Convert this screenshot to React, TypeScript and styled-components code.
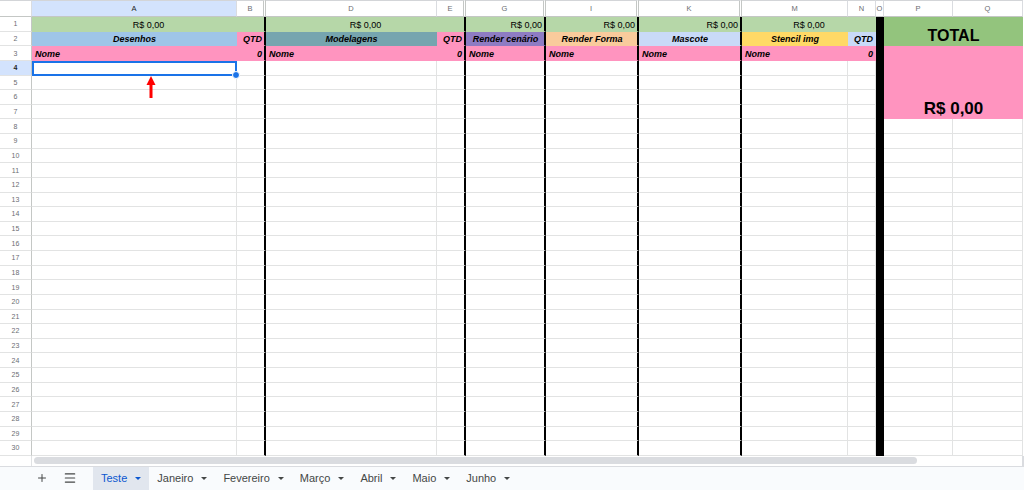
import React from 'react'
import styled, { createGlobalStyle } from 'styled-components'
import { Plus, Menu } from 'lucide-react'

const GlobalStyle = createGlobalStyle`
  html, body {
    margin: 0;
    padding: 0;
    background: #fff;
  }
  body {
    font-family: 'Liberation Sans', Arial, sans-serif;
  }
`

type Align = 'left' | 'center' | 'right'

interface CellSpec {
  text?: string
  bg?: string
  align?: Align
  bold?: boolean
  italic?: boolean
  colSpan?: number
  rowSpan?: number
  thick?: boolean
  size?: number
  selected?: boolean
}

const COLS = [
  { key: 'A', width: 205 },
  { key: 'B', width: 29, hiddenAfter: true },
  { key: 'D', width: 171 },
  { key: 'E', width: 29, hiddenAfter: true },
  { key: 'G', width: 80, hiddenAfter: true },
  { key: 'I', width: 93, hiddenAfter: true },
  { key: 'K', width: 103, hiddenAfter: true },
  { key: 'M', width: 106 },
  { key: 'N', width: 28 },
  { key: 'O', width: 8 },
  { key: 'P', width: 69 },
  { key: 'Q', width: 70 },
]

const THICK = new Set(['B', 'E', 'G', 'I', 'K'])

const GREEN = '#b6d7a8'
const TOTAL_GREEN = '#93c47d'
const PINK = '#ff94bf'
const BLUE = '#9fc5e8'
const TEAL = '#76a5af'
const PURPLE = '#8e7cc3'
const PEACH = '#f9cb9c'
const LIGHT_BLUE = '#c9daf8'
const YELLOW = '#ffd966'
const GRID = '#e2e3e3'

const black: CellSpec = { bg: '#000' }

const label = (text: string, bg: string, align: Align = 'center', thick = false): CellSpec => ({
  text,
  bg,
  align,
  bold: true,
  italic: true,
  thick,
})

const money = (align: Align, thick: boolean, colSpan = 1): CellSpec => ({
  text: 'R$ 0,00',
  bg: GREEN,
  align,
  thick,
  colSpan,
})

const emptyRow = (withTotal: boolean, selectedA = false): CellSpec[] =>
  COLS.filter((c) => withTotal || (c.key !== 'P' && c.key !== 'Q')).map((c) =>
    c.key === 'O' ? black : { thick: THICK.has(c.key), selected: selectedA && c.key === 'A' }
  )

const rows: CellSpec[][] = [
  [
    money('center', true, 2),
    money('center', true, 2),
    money('right', true),
    money('right', true),
    money('right', true),
    money('center', false, 2),
    black,
    { text: 'TOTAL', bg: TOTAL_GREEN, align: 'center', bold: true, size: 16, colSpan: 2, rowSpan: 2 },
  ],
  [
    label('Desenhos', BLUE),
    label('QTD', PINK, 'right', true),
    label('Modelagens', TEAL),
    label('QTD', PINK, 'right', true),
    label('Render cenário', PURPLE, 'center', true),
    label('Render Forma', PEACH, 'center', true),
    label('Mascote', LIGHT_BLUE, 'center', true),
    label('Stencil img', YELLOW),
    label('QTD', LIGHT_BLUE, 'right'),
    black,
  ],
  [
    label('Nome', PINK, 'left'),
    label('0', PINK, 'right', true),
    label('Nome', PINK, 'left'),
    label('0', PINK, 'right', true),
    label('Nome', PINK, 'left', true),
    label('Nome', PINK, 'left', true),
    label('Nome', PINK, 'left', true),
    label('Nome', PINK, 'left'),
    label('0', PINK, 'right'),
    black,
    { text: 'R$ 0,00', bg: PINK, align: 'center', bold: true, size: 17, colSpan: 2, rowSpan: 5 },
  ],
  emptyRow(false, true),
  emptyRow(false),
  emptyRow(false),
  emptyRow(false),
  ...Array.from({ length: 23 }, () => emptyRow(true)),
]

const TABS = ['Teste', 'Janeiro', 'Fevereiro', 'Março', 'Abril', 'Maio', 'Junho']

const Page = styled.div`
  width: 1024px;
  height: 490px;
  display: flex;
  flex-direction: column;
  overflow: hidden;
  background: #fff;
`

const Sheet = styled.div`
  position: relative;
  display: grid;
  grid-template-columns: 32px ${COLS.map((c) => `${c.width}px`).join(' ')};
  grid-template-rows: 17px repeat(30, 14.633px);
`

const ColHead = styled.div<{ $active?: boolean; $hiddenAfter?: boolean }>`
  box-sizing: border-box;
  display: flex;
  align-items: center;
  justify-content: center;
  font-size: 7.5px;
  color: ${(p) => (p.$active ? '#1f1f1f' : '#6b6e72')};
  background: ${(p) => (p.$active ? '#d3e3fd' : '#fff')};
  border-top: 1px solid #d3d5d8;
  border-bottom: 1px solid #c4c7c5;
  border-right: ${(p) => (p.$hiddenAfter ? '3px double #c4c7c5' : '1px solid #dadce0')};
  overflow: hidden;
`

const RowHead = styled.div<{ $active?: boolean }>`
  box-sizing: border-box;
  display: flex;
  align-items: center;
  justify-content: center;
  font-size: 7px;
  font-weight: ${(p) => (p.$active ? 'bold' : 'normal')};
  color: ${(p) => (p.$active ? '#1f1f1f' : '#6b6e72')};
  background: ${(p) => (p.$active ? '#d3e3fd' : '#fff')};
  border-right: 1px solid #c4c7c5;
  border-bottom: 1px solid ${GRID};
`

const justify: Record<Align, string> = {
  left: 'flex-start',
  center: 'center',
  right: 'flex-end',
}

const Cell = styled.div<{
  $bg?: string
  $align: Align
  $bold?: boolean
  $italic?: boolean
  $colSpan: number
  $rowSpan: number
  $thick?: boolean
  $size: number
  $selected?: boolean
}>`
  box-sizing: border-box;
  position: relative;
  grid-column: span ${(p) => p.$colSpan};
  grid-row: span ${(p) => p.$rowSpan};
  display: flex;
  align-items: flex-end;
  justify-content: ${(p) => justify[p.$align]};
  padding: 0 2px 1px 3px;
  background: ${(p) => p.$bg ?? '#fff'};
  border-right: ${(p) => (p.$thick ? '2px solid #000' : `1px solid ${p.$bg ? 'transparent' : GRID}`)};
  border-bottom: 1px solid ${(p) => (p.$bg ? 'transparent' : GRID)};
  font-size: ${(p) => p.$size}px;
  font-weight: ${(p) => (p.$bold ? 'bold' : 'normal')};
  font-style: ${(p) => (p.$italic ? 'italic' : 'normal')};
  line-height: 1;
  color: #000;
  white-space: nowrap;

  ${(p) =>
    p.$selected &&
    `
    &::after {
      content: '';
      position: absolute;
      top: 0;
      left: 0;
      right: -1px;
      bottom: -1px;
      border: 2px solid #1a73e8;
      z-index: 2;
    }
  `}
`

const FillHandle = styled.span`
  position: absolute;
  right: -4px;
  bottom: -4px;
  width: 6px;
  height: 6px;
  border-radius: 50%;
  background: #1a73e8;
  border: 1px solid #fff;
  z-index: 3;
`

const Arrow = styled.svg`
  position: absolute;
  left: 146px;
  top: 76px;
  z-index: 4;
`

const ScrollRow = styled.div`
  display: flex;
  height: 10px;
`

const ScrollGutter = styled.div`
  box-sizing: border-box;
  width: 32px;
  border-right: 1px solid #e0e2e4;
`

const ScrollTrack = styled.div`
  flex: 1;
  display: flex;
  align-items: center;
  padding-left: 2px;
  border-right: 2px solid #dadce0;
`

const ScrollThumb = styled.div`
  width: 883px;
  height: 7px;
  border-radius: 4px;
  background: #dadce0;
`

const TabBar = styled.div`
  height: 23px;
  border-top: 1px solid #dadce0;
  background: #f9fbfd;
  display: flex;
  align-items: stretch;
  padding-left: 28px;
`

const IconButton = styled.div`
  width: 28px;
  display: flex;
  align-items: center;
  justify-content: center;
  color: #444746;
`

const TabList = styled.div`
  display: flex;
  margin-left: 9px;
`

const Tab = styled.div<{ $active?: boolean }>`
  display: flex;
  align-items: center;
  gap: 8px;
  padding: 0 8px;
  font-size: 11px;
  color: ${(p) => (p.$active ? '#0b57d0' : '#444746')};
  background: ${(p) => (p.$active ? '#e1e6ee' : 'transparent')};
`

const Caret = styled.span`
  width: 0;
  height: 0;
  border-left: 3px solid transparent;
  border-right: 3px solid transparent;
  border-top: 3px solid currentColor;
`

export default function App() {
  return (
    <>
      <GlobalStyle />
      <Page>
        <Sheet>
          <ColHead />
          {COLS.map((c) => (
            <ColHead key={c.key} $active={c.key === 'A'} $hiddenAfter={c.hiddenAfter}>
              {c.key}
            </ColHead>
          ))}
          {rows.map((cells, r) => (
            <React.Fragment key={r}>
              <RowHead $active={r === 3}>{r + 1}</RowHead>
              {cells.map((c, i) => (
                <Cell
                  key={i}
                  $bg={c.bg}
                  $align={c.align ?? 'left'}
                  $bold={c.bold}
                  $italic={c.italic}
                  $colSpan={c.colSpan ?? 1}
                  $rowSpan={c.rowSpan ?? 1}
                  $thick={c.thick}
                  $size={c.size ?? 9}
                  $selected={c.selected}
                >
                  {c.text}
                  {c.selected && <FillHandle />}
                </Cell>
              ))}
            </React.Fragment>
          ))}
          <Arrow width="10" height="22" viewBox="0 0 10 22">
            <polygon points="5,0 0.5,9 9.5,9" fill="#ff0000" />
            <rect x="3.5" y="8" width="3" height="14" fill="#ff0000" />
          </Arrow>
        </Sheet>
        <ScrollRow>
          <ScrollGutter />
          <ScrollTrack>
            <ScrollThumb />
          </ScrollTrack>
        </ScrollRow>
        <TabBar>
          <IconButton>
            <Plus size={12} strokeWidth={2} />
          </IconButton>
          <IconButton>
            <Menu size={14} strokeWidth={2} />
          </IconButton>
          <TabList>
            {TABS.map((t, i) => (
              <Tab key={t} $active={i === 0}>
                {t}
                <Caret />
              </Tab>
            ))}
          </TabList>
        </TabBar>
      </Page>
    </>
  )
}
